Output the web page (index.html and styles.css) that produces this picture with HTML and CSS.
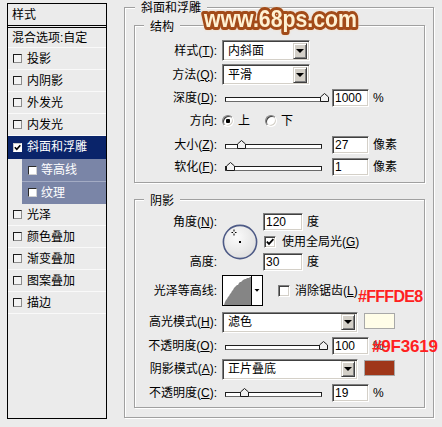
FILE: index.html
```html
<!DOCTYPE html>
<html lang="zh-CN">
<head>
<meta charset="utf-8">
<title>图层样式 - 斜面和浮雕</title>
<link rel="stylesheet" href="styles.css">
</head>
<body>
<div class="dialog">
  <div class="style-list">
    <div class="list-head">样式</div>
    <div class="list-item blend">混合选项:自定</div>
    <div class="list-item"><span class="cb"></span><span>投影</span></div>
    <div class="list-item"><span class="cb"></span><span>内阴影</span></div>
    <div class="list-item"><span class="cb"></span><span>外发光</span></div>
    <div class="list-item"><span class="cb"></span><span>内发光</span></div>
    <div class="list-item selected"><span class="cb on"><svg width="7" height="7" viewBox="0 0 7 7"><path d="M0.8 3.2 L2.8 5.3 L6.3 1.2" fill="none" stroke="#000" stroke-width="1.6"/></svg></span><span>斜面和浮雕</span></div>
    <div class="list-item sub"><span class="cb"></span><span>等高线</span></div>
    <div class="list-item sub sub-last"><span class="cb"></span><span>纹理</span></div>
    <div class="list-item"><span class="cb"></span><span>光泽</span></div>
    <div class="list-item"><span class="cb"></span><span>颜色叠加</span></div>
    <div class="list-item"><span class="cb"></span><span>渐变叠加</span></div>
    <div class="list-item"><span class="cb"></span><span>图案叠加</span></div>
    <div class="list-item"><span class="cb"></span><span>描边</span></div>
  </div>

  <div class="group outer">
    <div class="legend legend-outer">斜面和浮雕</div>

    <div class="group inner structure">
      <div class="legend">结构</div>
      <div class="row row-select">
        <span class="lbl">样式(<u>T</u>):</span>
        <div class="select"><span class="select-text">内斜面</span><span class="arrow"><i class="tri"></i></span></div>
      </div>
      <div class="row row-select">
        <span class="lbl">方法(<u>Q</u>):</span>
        <div class="select"><span class="select-text">平滑</span><span class="arrow"><i class="tri"></i></span></div>
      </div>
      <div class="row row-field">
        <span class="lbl">深度(<u>D</u>):</span>
        <div class="slider"><div class="track"></div><svg class="thumb" style="left:95px" width="9" height="9" viewBox="0 0 9 9"><polygon points="0.5,8.5 0.5,4 4.5,0.5 8.5,4 8.5,8.5" fill="#f2f2f2" stroke="#1a1a1a"/></svg></div>
        <div class="num">1000</div>
        <span class="unit">%</span>
      </div>
      <div class="row row-radio">
        <span class="lbl">方向:</span>
        <span class="radio"><i class="dot"></i></span>
        <span class="radio-text">上</span>
        <span class="radio radio-2"></span>
        <span class="radio-text">下</span>
      </div>
      <div class="row row-field">
        <span class="lbl">大小(<u>Z</u>):</span>
        <div class="slider"><div class="track"></div><svg class="thumb" style="left:12px" width="9" height="9" viewBox="0 0 9 9"><polygon points="0.5,8.5 0.5,4 4.5,0.5 8.5,4 8.5,8.5" fill="#f2f2f2" stroke="#1a1a1a"/></svg></div>
        <div class="num">27</div>
        <span class="unit">像素</span>
      </div>
      <div class="row row-field">
        <span class="lbl">软化(<u>F</u>):</span>
        <div class="slider"><div class="track"></div><svg class="thumb" style="left:1px" width="9" height="9" viewBox="0 0 9 9"><polygon points="0.5,8.5 0.5,4 4.5,0.5 8.5,4 8.5,8.5" fill="#f2f2f2" stroke="#1a1a1a"/></svg></div>
        <div class="num">1</div>
        <span class="unit">像素</span>
      </div>
    </div>

    <div class="group inner shadow">
      <div class="legend">阴影</div>
      <div class="angle">
        <span class="lbl angle-lbl">角度(<u>N</u>):</span>
        <svg class="dial" width="36" height="36" viewBox="0 0 36 36">
          <defs>
            <radialGradient id="dialfill" cx="40%" cy="35%" r="70%">
              <stop offset="0" stop-color="#fbfbfb"/>
              <stop offset="1" stop-color="#dedede"/>
            </radialGradient>
          </defs>
          <circle cx="18" cy="18" r="16.6" fill="url(#dialfill)" stroke="#4d5a86" stroke-width="1.6"/>
          <path d="M9.5 8.5 H11 M13 8.5 H14.5 M12 5.5 V7.5 M12 9.5 V11.5" stroke="#000" stroke-width="1"/>
          <rect x="17" y="17" width="2" height="2" fill="#000"/>
        </svg>
        <div class="angle-val"><div class="num num40">120</div><span class="unit">度</span></div>
        <div class="angle-global"><span class="chk"><svg width="10" height="10" viewBox="0 0 10 10"><path d="M1.8 4.6 L4 6.9 L8.4 2.2" fill="none" stroke="#000" stroke-width="1.8"/></svg></span><span class="chk-text">使用全局光(<u>G</u>)</span></div>
        <span class="lbl height-lbl">高度:</span>
        <div class="height-val"><div class="num num40">30</div><span class="unit">度</span></div>
      </div>

      <div class="row row-contour">
        <span class="lbl">光泽等高线:</span>
        <svg class="contour" width="41" height="31" viewBox="0 0 41 31">
          <rect x="0.5" y="0.5" width="40" height="30" fill="#fff" stroke="#000"/>
          <polygon points="2,30 3,27 4,25 5,24 6,22 7,21 8,19 9,18 10,16 11,15 12,13 13,12 14,11 15,10 16,10 17,8 18,7 19,7 20,6 21,5 23,4 24,4 25,3 27,3 28,2 29,2 29,30" fill="#858585"/>
          <line x1="29.5" y1="0.5" x2="29.5" y2="30.5" stroke="#000"/>
          <polygon points="32.5,14 37.5,14 35,16.8" fill="#000"/>
        </svg>
        <span class="chk chk-aa"></span><span class="chk-text">消除锯齿(<u>L</u>)</span>
      </div>

      <div class="row row-mode mode-first">
        <span class="lbl">高光模式(<u>H</u>):</span>
        <div class="select select-wide"><span class="select-text">滤色</span><span class="arrow"><i class="tri"></i></span></div>
        <span class="swatch swatch-hl"></span>
      </div>
      <div class="row row-field row-gap">
        <span class="lbl">不透明度(<u>O</u>):</span>
        <div class="slider"><div class="track"></div><svg class="thumb" style="left:94px" width="9" height="9" viewBox="0 0 9 9"><polygon points="0.5,8.5 0.5,4 4.5,0.5 8.5,4 8.5,8.5" fill="#f2f2f2" stroke="#1a1a1a"/></svg></div>
        <div class="num">100</div>
        <span class="unit">%</span>
      </div>
      <div class="row row-mode row-gap">
        <span class="lbl">阴影模式(<u>A</u>):</span>
        <div class="select select-wide"><span class="select-text">正片叠底</span><span class="arrow"><i class="tri"></i></span></div>
        <span class="swatch swatch-sh"></span>
      </div>
      <div class="row row-field row-gap">
        <span class="lbl">不透明度(<u>C</u>):</span>
        <div class="slider"><div class="track"></div><svg class="thumb" style="left:15px" width="9" height="9" viewBox="0 0 9 9"><polygon points="0.5,8.5 0.5,4 4.5,0.5 8.5,4 8.5,8.5" fill="#f2f2f2" stroke="#1a1a1a"/></svg></div>
        <div class="num">19</div>
        <span class="unit">%</span>
      </div>
    </div>
  </div>
</div>

<svg class="watermark" width="200" height="38" viewBox="0 0 200 38">
  <text x="6" y="27" textLength="153" lengthAdjust="spacingAndGlyphs" font-family="Liberation Sans, Arial, sans-serif" font-weight="bold" font-size="24" fill="#fff1d2" stroke="#a24b19" stroke-width="6" stroke-linejoin="round" paint-order="stroke">www.68ps.com</text>
</svg>
<div class="note note-hl">#FFFDE8</div>
<div class="note note-sh">#9F3619</div>
</body>
</html>
```

FILE: styles.css
```css
* { box-sizing: border-box; }

html, body { margin: 0; padding: 0; }

body {
  position: relative;
  width: 442px;
  height: 427px;
  overflow: hidden;
  background: #ebebeb;
  color: #000;
  font-family: "Liberation Sans", "Noto Sans CJK SC", sans-serif;
  font-size: 12px;
  line-height: 14px;
}

u { text-decoration: underline; text-underline-offset: 1px; }

.dialog {
  display: flex;
  align-items: flex-start;
  gap: 17px;
  padding: 3px 0 0 7px;
}

/* ---------- left style list ---------- */
.style-list {
  width: 100px;
  height: 416px;
  border: 1px solid #000;
  display: flex;
  flex-direction: column;
  flex: none;
}

.list-head {
  height: 24px;
  padding-left: 4px;
  display: flex;
  align-items: center;
  border-bottom: 3px double #000;
  flex: none;
}

.list-item {
  height: 22px;
  display: flex;
  align-items: center;
  gap: 5px;
  padding-left: 5px;
  border-bottom: 1px solid #f9f9f9;
  flex: none;
  white-space: nowrap;
}

.list-item.blend { height: 20px; padding-left: 4px; }

.list-item.selected {
  height: 23px;
  background: #0a246a;
  color: #fff;
  border-bottom-color: #0a246a;
}

.list-item.sub {
  height: 23px;
  margin-left: 14px;
  padding-left: 6px;
  gap: 4px;
  background: #7a85a7;
  color: #fff;
  border-bottom-color: #a3abc4;
}

.list-item.sub-last { height: 22px; border-bottom-color: #7a85a7; }

.cb {
  width: 9px;
  height: 9px;
  flex: none;
  border: 1px solid;
  border-color: #1c1c1c #8c8c8c #8c8c8c #1c1c1c;
  background: #f3f3f3;
  display: flex;
  align-items: center;
  justify-content: center;
}

.cb.on { background: #fff; border-color: #c8c8c8 #fff #fff #c8c8c8; }

.sub .cb { background: #fff; border-color: #2a2a2a #d0d0d0 #d0d0d0 #2a2a2a; }

/* ---------- group boxes ---------- */
.group {
  position: relative;
  border: 1px solid #a0a0a0;
  box-shadow: inset 1px 1px 0 #fff, 1px 1px 0 #fff;
}

.legend {
  position: absolute;
  top: -7px;
  left: 9px;
  padding: 0 6px;
  background: #ebebeb;
  line-height: 16px;
  white-space: nowrap;
}

.legend-outer { top: -8px; left: 10px; }

.outer {
  width: 310px;
  height: 411px;
  margin-top: 4px;
  padding: 17px 8px 9px 9px;
  flex: none;
}

.inner { width: 291px; }

.structure {
  display: flex;
  flex-direction: column;
  gap: 3px;
  padding: 14px 0 6px 0;
}

.shadow {
  margin-top: 16px;
  display: flex;
  flex-direction: column;
  padding: 13px 0 5px 0;
}

/* ---------- rows ---------- */
.row {
  display: flex;
  align-items: center;
  white-space: nowrap;
}

.row-select { height: 21px; }
.row-field { height: 19px; }
.row-radio { height: 22px; }
.row-mode { height: 20px; }
.row-contour { height: 31px; margin-top: 4px; }
.mode-first { margin-top: 6px; }
.row-gap { margin-top: 4px; }

.lbl {
  width: 82px;
  margin-right: 5px;
  text-align: right;
  flex: none;
  white-space: nowrap;
}

/* sunken controls */
.select,
.num,
.chk,
.radio {
  border: 1px solid;
  border-color: #808080 #fff #fff #808080;
  box-shadow: inset 1px 1px 0 #404040, inset -1px -1px 0 #d4d0c8;
  background: #fff;
}

.select {
  width: 88px;
  height: 21px;
  display: flex;
  align-items: center;
  padding: 2px 2px 2px 5px;
  flex: none;
}

.select-wide { width: 136px; }

.select-text { flex: 1; }

.arrow {
  width: 14px;
  height: 16px;
  flex: none;
  background: #d4d0c8;
  border: 1px solid;
  border-color: #d4d0c8 #404040 #404040 #d4d0c8;
  box-shadow: inset 1px 1px 0 #fff, inset -1px -1px 0 #808080;
  display: flex;
  align-items: center;
  justify-content: center;
}

.tri {
  width: 0;
  height: 0;
  border-left: 4px solid transparent;
  border-right: 4px solid transparent;
  border-top: 4px solid #000;
}

.num {
  width: 37px;
  height: 18px;
  padding-left: 2px;
  display: flex;
  align-items: center;
  flex: none;
}

.num40 { width: 40px; }

.unit { margin-left: 4px; }

/* slider */
.slider {
  position: relative;
  width: 107px;
  height: 9px;
  margin-left: 3px;
  flex: none;
}

.track {
  width: 97px;
  height: 5px;
  margin-top: 4px;
  background: #fff;
  border: 1px solid #1e1e1e;
  border-bottom-color: #6a6a6a;
}

.thumb {
  position: absolute;
  top: 0;
  display: block;
}

/* radio */
.radio {
  width: 12px;
  height: 12px;
  border-radius: 50%;
  flex: none;
  display: flex;
  align-items: center;
  justify-content: center;
}

.dot {
  width: 4px;
  height: 4px;
  border-radius: 1px;
  background: #000;
}

.radio-text { margin-left: 4px; }

.radio-2 { margin-left: 15px; }

/* angle block */
.angle {
  display: grid;
  grid-template-columns: 82px 36px auto;
  grid-template-rows: 18px 16px 18px;
  column-gap: 5px;
  row-gap: 3px;
  align-items: center;
}

.angle .lbl { width: auto; margin-right: 0; }

.angle-lbl { grid-column: 1; grid-row: 1; }

.height-lbl { grid-column: 1; grid-row: 3; }

.dial { grid-column: 2; grid-row: 1 / 4; display: block; }

.angle-val,
.height-val,
.angle-global {
  grid-column: 3;
  display: flex;
  align-items: center;
  white-space: nowrap;
}

.angle-val { grid-row: 1; }
.angle-global { grid-row: 2; padding-left: 1px; }
.height-val { grid-row: 3; }

.chk {
  width: 12px;
  height: 12px;
  flex: none;
  display: flex;
  align-items: center;
  justify-content: center;
}

.chk-text { margin-left: 6px; }

.chk-aa { margin-left: 15px; }

.row-contour .chk-text { margin-left: 5px; }

.contour { display: block; flex: none; }

/* colour swatches */
.swatch {
  width: 31px;
  height: 16px;
  margin-left: 6px;
  align-self: flex-start;
  margin-top: 1px;
  border: 1px solid #a8a8a8;
  flex: none;
}

.swatch-hl { background: #fffde8; }
.swatch-sh { background: #9f3619; }

/* ---------- overlays ---------- */
.watermark {
  position: absolute;
  left: 198px;
  top: 0;
  filter: drop-shadow(0 0 1px #f6dcc0);
}

.note {
  position: absolute;
  color: #ff2020;
  font-family: "Liberation Sans", sans-serif;
  font-weight: bold;
  line-height: 1;
  white-space: nowrap;
}

.note-hl { left: 358px; top: 289px; font-size: 16px; letter-spacing: -0.7px; }

.note-sh { left: 372px; top: 338px; font-size: 17px; letter-spacing: -0.2px; }
```
